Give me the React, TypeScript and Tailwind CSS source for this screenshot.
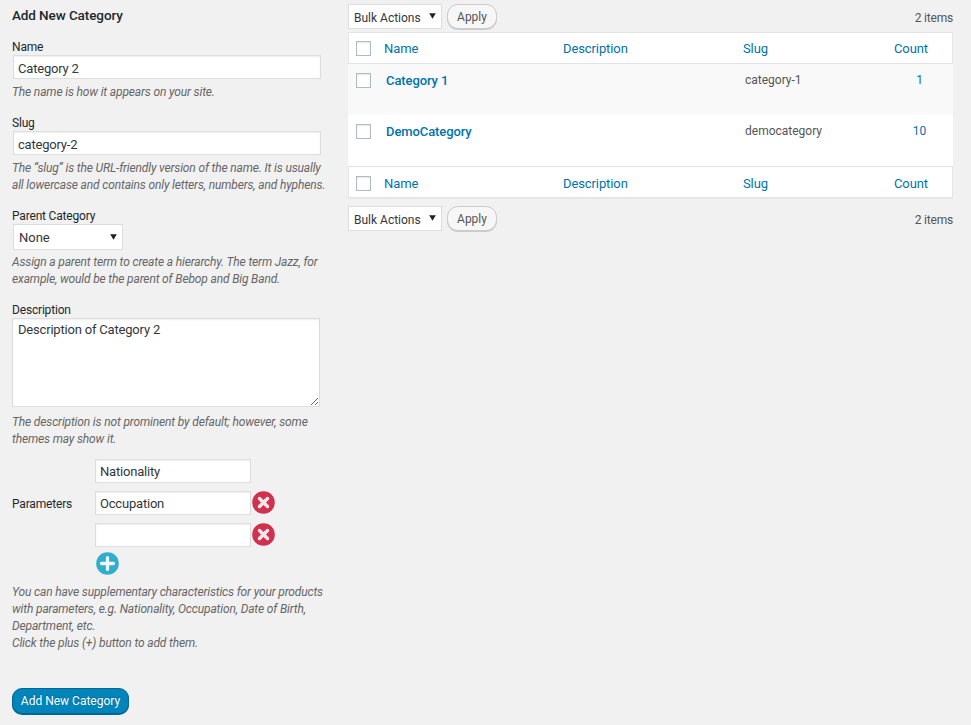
import React from "react";

const help = "text-[12px] leading-[17px] italic tracking-[-0.15px] text-[#666] whitespace-nowrap";
const label = "block h-[18px] pt-[2px] text-[12px] leading-[16px] tracking-[-0.18px] text-[#23282d]";
const input = "block h-6 border border-[#ddd] bg-white px-[4px] pt-px text-[13px] leading-[21px] tracking-[-0.2px] text-[#32373c] outline-none shadow-[inset_0_1px_2px_rgba(0,0,0,0.07)]";
const inputLow = "block h-6 border border-[#ddd] bg-white px-[4px] pt-[3px] text-[13px] leading-[19px] tracking-[-0.2px] text-[#32373c] outline-none shadow-[inset_0_1px_2px_rgba(0,0,0,0.07)]";

function Caret({ top }: { top: string }) {
  return (
    <svg viewBox="0 0 7 6" className={`absolute right-[6px] h-[6px] w-[7px] pointer-events-none ${top}`}>
      <path d="M0.2 0.3H6.8L3.5 5.8Z" fill="#222" />
    </svg>
  );
}

function Remove() {
  return (
    <svg viewBox="0 0 24 24" className="ml-px h-[23px] w-[23px] shrink-0 -mt-[2px]">
      <circle cx="12" cy="12" r="11.8" fill="#cf314f" />
      <path d="M7.8 7.8L16.2 16.2M16.2 7.8L7.8 16.2" stroke="#f6e8ea" strokeWidth="3.6" strokeLinecap="round" />
    </svg>
  );
}

function Add() {
  return (
    <svg viewBox="0 0 24 24" className="h-[23px] w-[23px]">
      <circle cx="12" cy="12" r="11.8" fill="#31aecb" />
      <path d="M12 5.8V18.2M5.8 12H18.2" stroke="#eef8fb" strokeWidth="3.4" strokeLinecap="round" />
    </svg>
  );
}

function Bulk() {
  return (
    <div className="flex h-[25px] items-center">
      <div className="relative h-[25px] w-[94px]">
        <select defaultValue="bulk" className="block h-[25px] w-[94px] appearance-none rounded-none border border-[#ddd] bg-white pl-[5px] pt-[2px] text-[12px] text-[#32373c] outline-none">
          <option value="bulk">Bulk Actions</option>
        </select>
        <Caret top="top-[9px]" />
      </div>
      <button className="ml-[5px] h-[25px] w-[50px] rounded-[11px] border border-[#ccc] bg-[#f7f7f7] text-[12px] leading-[22px] text-[#555] shadow-[0_1px_0_#ccc]">
        Apply
      </button>
    </div>
  );
}

const cols = "grid grid-cols-[27px_179px_180px_151px_1fr]";

function Box() {
  return <span className="block h-[15px] w-[15px] border border-[#b4b9be] bg-white shadow-[inset_0_1px_2px_rgba(0,0,0,0.1)]" />;
}

function HeadRow({ className }: { className: string }) {
  return (
    <div className={`${cols} h-[31px] items-center bg-white text-[13px] tracking-[-0.1px] text-[#0073aa] ${className}`}>
      <div className="pl-[7px]"><Box /></div>
      <div className="pl-[8px] pt-px">Name</div>
      <div className="pl-[8px] pt-px">Description</div>
      <div className="pl-[8px] pt-px">Slug</div>
      <div className="pl-[8px] pt-px">Count</div>
    </div>
  );
}

function Row({ name, slug, count, className }: { name: string; slug: string; count: string; className: string }) {
  return (
    <div className={`${cols} -mx-px h-[51px] px-px pt-[8px] text-[12px] leading-[17px] ${className}`}>
      <div className="pl-[7px] pt-px"><Box /></div>
      <div className="pl-[10px] text-[13px] font-medium tracking-[-0.1px] text-[#0073aa]">{name}</div>
      <div />
      <div className="pl-[10px] text-[#555]">{slug}</div>
      <div className="pl-px text-center text-[#0073aa]">{count}</div>
    </div>
  );
}

export default function App() {
  return (
    <div className="flex min-h-[725px] bg-[#f1f1f1] font-['Roboto','Liberation_Sans',sans-serif] text-[12px] text-[#444]">
      <div className="w-[336px] shrink-0 pl-3 pt-[5px]">
        <h2 className="text-[13.5px] leading-5 font-medium tracking-[-0.1px] text-[#23282d]">Add New Category</h2>

        <label className={`${label} mt-[12px]`}>Name</label>
        <input className={`${inputLow} ml-px w-[308px]`} defaultValue="Category 2" />
        <p className={`${help} mt-[5px]`}>The name is how it appears on your site.</p>

        <label className={`${label} mt-[12px]`}>Slug</label>
        <input className={`${inputLow} ml-px w-[308px]`} defaultValue="category-2" />
        <p className={`${help} mt-[5px]`}>
          The “slug” is the URL-friendly version of the name. It is usually<br />
          all lowercase and contains only letters, numbers, and hyphens.
        </p>

        <label className={`${label} mt-[12px]`}>Parent Category</label>
        <div className="relative ml-px h-[26px] w-[110px]">
          <select defaultValue="none" className="block h-[26px] w-[110px] appearance-none rounded-none border border-[#ddd] bg-white pl-[5px] pt-px text-[13px] text-[#32373c] outline-none">
            <option value="none">None</option>
          </select>
          <Caret top="top-[10px]" />
        </div>
        <p className={`${help} mt-[4px]`}>
          Assign a parent term to create a hierarchy. The term Jazz, for<br />
          example, would be the parent of Bebop and Big Band.
        </p>

        <label className={`${label} mt-[12px]`}>Description</label>
        <textarea
          className="block h-[89px] w-[308px] border border-[#ddd] bg-white px-[5px] pt-px text-[13px] leading-[19px] tracking-[-0.19px] text-[#32373c] outline-none shadow-[inset_0_1px_2px_rgba(0,0,0,0.07)]"
          defaultValue="Description of Category 2"
        />
        <p className={`${help} mt-[7px]`}>
          The description is not prominent by default; however, some<br />
          themes may show it.
        </p>

        <div className="mt-[11px] flex flex-col gap-2">
          <div className="flex items-center pl-[83px]">
            <input className={`${input} w-[156px]`} defaultValue="Nationality" />
          </div>
          <div className="flex items-center">
            <span className="w-[83px] shrink-0 pt-px text-[12px] tracking-[-0.18px] text-[#23282d]">Parameters</span>
            <input className={`${input} w-[156px]`} defaultValue="Occupation" />
            <Remove />
          </div>
          <div className="flex items-center pl-[83px]">
            <input className={`${input} w-[156px]`} defaultValue="" />
            <Remove />
          </div>
        </div>
        <div className="mt-[5px] pl-[84px]"><Add /></div>

        <p className={`${help} mt-[9px]`}>
          You can have supplementary characteristics for your products<br />
          with parameters, e.g. Nationality, Occupation, Date of Birth,<br />
          Department, etc.<br />
          Click the plus (+) button to add them.
        </p>

        <button className="mt-[36px] block h-[26px] w-[117px] rounded-[10px] border border-[#006799] bg-[#0085ba] pt-px text-[12px] leading-[23px] text-white shadow-[0_1px_0_#006799] [text-shadow:0_-1px_1px_#006799]">
          Add New Category
        </button>
      </div>

      <div className="w-[617px] shrink-0 pl-3">
        <div className="mt-[4px] flex items-center justify-between">
          <Bulk />
          <span className="pt-[2px] text-[12px] tracking-[-0.2px] text-[#555]">2 items</span>
        </div>
        <div className="mt-[3px] border border-[#e5e5e5] shadow-[0_1px_1px_rgba(0,0,0,0.04)]">
          <HeadRow className="border-b border-[#e1e1e1]" />
          <Row name="Category 1" slug="category-1" count="1" className="bg-[#f9f9f9]" />
          <Row name="DemoCategory" slug="democategory" count="10" className="bg-white" />
          <HeadRow className="border-t border-[#e1e1e1] pt-[2px]" />
        </div>
        <div className="mt-[8px] flex items-center justify-between">
          <Bulk />
          <span className="pt-[2px] text-[12px] tracking-[-0.2px] text-[#555]">2 items</span>
        </div>
      </div>
    </div>
  );
}
